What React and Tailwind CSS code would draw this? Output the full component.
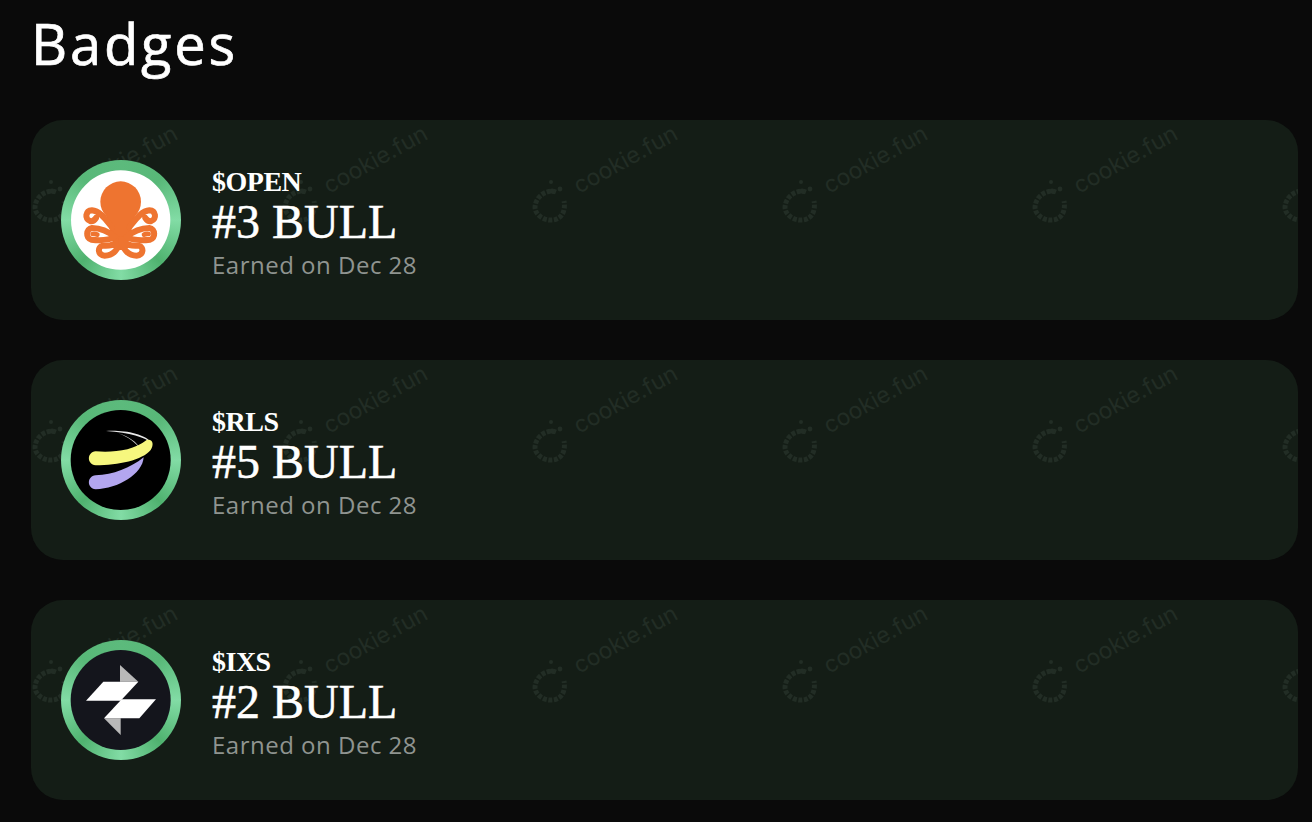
const tiles = [0, 1, 2, 3, 4, 5];
const wm = "#222d25";

function Watermark() {
  return (
    <svg className="absolute inset-0 w-full h-full" aria-hidden="true">
      {tiles.map((k) => (
        <g key={k} transform={`translate(${19 + 250 * k} 85)`} fill={wm} stroke="none">
          <path d="M 6 -13 C -2 -16 -14 -10 -15 2 C -15 10 -6 16 3 15 C 11 14 16 7 14 -4" fill="none" stroke={wm} strokeWidth="5" strokeDasharray="4 1.5" />
          <circle cx="1" cy="-23" r="2" />
          <circle cx="2" cy="-14" r="2.6" />
          <circle cx="10" cy="-16" r="2.4" />
          <text x="29" y="-11" transform="rotate(-29 29 -11)" fontSize="23" fontFamily="Inter, sans-serif">
            cookie.fun
          </text>
        </g>
      ))}
    </svg>
  );
}

function OctoSide() {
  return (
    <g fill="none" stroke="#ee7430" strokeWidth="18" strokeLinecap="round" strokeLinejoin="round">
      <path d="M186 232 C170 212 150 182 126 181 C106 182 103 207 120 213 C128 215 134 210 138 204" />
      <path d="M196 262 C175 244 150 234 126 234 C108 236 106 266 124 269 C150 272 172 272 196 262" />
      <path d="M142 254 C134 250 130 252 128 252" strokeWidth="14" />
      <path d="M208 270 C196 288 176 288 158 287 C142 290 142 316 164 317 C190 317 208 296 210 268" />
    </g>
  );
}

function Octopus() {
  return (
    <svg viewBox="33 30 360 360" className="absolute inset-0 w-full h-full">
      <circle cx="212" cy="210" r="149" fill="#ffffff" />
      <circle cx="212" cy="155" r="61" fill="#ee7430" />
      <path d="M168 190 C172 225 186 240 178 258 L204 300 L220 300 L246 258 C238 240 252 225 256 190 Z" fill="#ee7430" />
      <OctoSide />
      <g transform="translate(424 0) scale(-1 1)">
        <OctoSide />
      </g>
    </svg>
  );
}

function Rls() {
  return (
    <svg viewBox="33 30 360 360" className="absolute inset-0 w-full h-full">
      <circle cx="212" cy="210" r="150" fill="#000000" />
      <path d="M168 123 C220 120 285 130 306 160 C285 142 240 128 168 123 Z" fill="#e9e9e9" />
      <path d="M205 130 C235 140 262 155 272 180 C258 158 235 142 205 130 Z" fill="#c9c9c9" />
      <path d="M137 184 C190 188 250 182 290 150 C310 146 312 165 302 180 C278 210 205 226 137 226 C110 224 110 186 137 184 Z" fill="#f6f77e" />
      <path d="M137 256 C190 254 240 235 281 202 C278 252 205 296 137 298 C110 296 110 258 137 256 Z" fill="#b3a6ef" />
    </svg>
  );
}

function Ixs() {
  return (
    <svg viewBox="33 30 360 360" className="absolute inset-0 w-full h-full">
      <circle cx="212" cy="210" r="150" fill="#14151c" />
      <polygon points="210,105 265,155 210,155" fill="#b9b9b9" />
      <polygon points="212,315 162,265 212,265" fill="#b9b9b9" />
      <polygon points="108,212 160,155 265,155 212,212" fill="#ffffff" />
      <polygon points="162,265 215,208 318,208 268,265" fill="#ffffff" />
    </svg>
  );
}

const badges = [
  { ticker: "$OPEN", rank: "#3 BULL", Logo: Octopus },
  { ticker: "$RLS", rank: "#5 BULL", Logo: Rls },
  { ticker: "$IXS", rank: "#2 BULL", Logo: Ixs },
];

export default function App() {
  return (
    <div className="min-h-[822px] bg-[#0a0a0a] pl-[31px] pr-[14px] font-['Open_Sans',sans-serif] overflow-hidden">
      <h1 className="h-[120px] pt-[4px] text-[56px] leading-[78px] font-medium tracking-[2.8px] text-white [-webkit-text-stroke:0.7px_white]">Badges</h1>
      <div className="flex flex-col gap-[40px]">
        {badges.map(({ ticker, rank, Logo }) => (
          <div key={ticker} className="relative h-[200px] rounded-[32px] bg-[#141d16] overflow-hidden flex items-center pl-[30px] gap-[31px]">
            <Watermark />
            <div className="relative w-[120px] h-[120px] rounded-full shrink-0 bg-[conic-gradient(#5cba7c,#58b878_12%,#82dca5_25%,#4fb26f_38%,#82dca5_50%,#4fb26f_62%,#82dca5_75%,#58b878_88%,#5cba7c)]">
              <Logo />
            </div>
            <div className="relative flex flex-col pt-[9px] text-white font-['Liberation_Serif',serif]">
              <div className="text-[28px] leading-[28px] font-bold -tracking-[0.5px]">{ticker}</div>
              <div className="text-[48px] leading-[52px] [-webkit-text-stroke:0.5px_white]">{rank}</div>
              <div className="text-[24px] leading-[33px] tracking-[0.5px] text-[#8f9490] font-['Open_Sans',sans-serif]">Earned on Dec 28</div>
            </div>
          </div>
        ))}
      </div>
    </div>
  );
}
